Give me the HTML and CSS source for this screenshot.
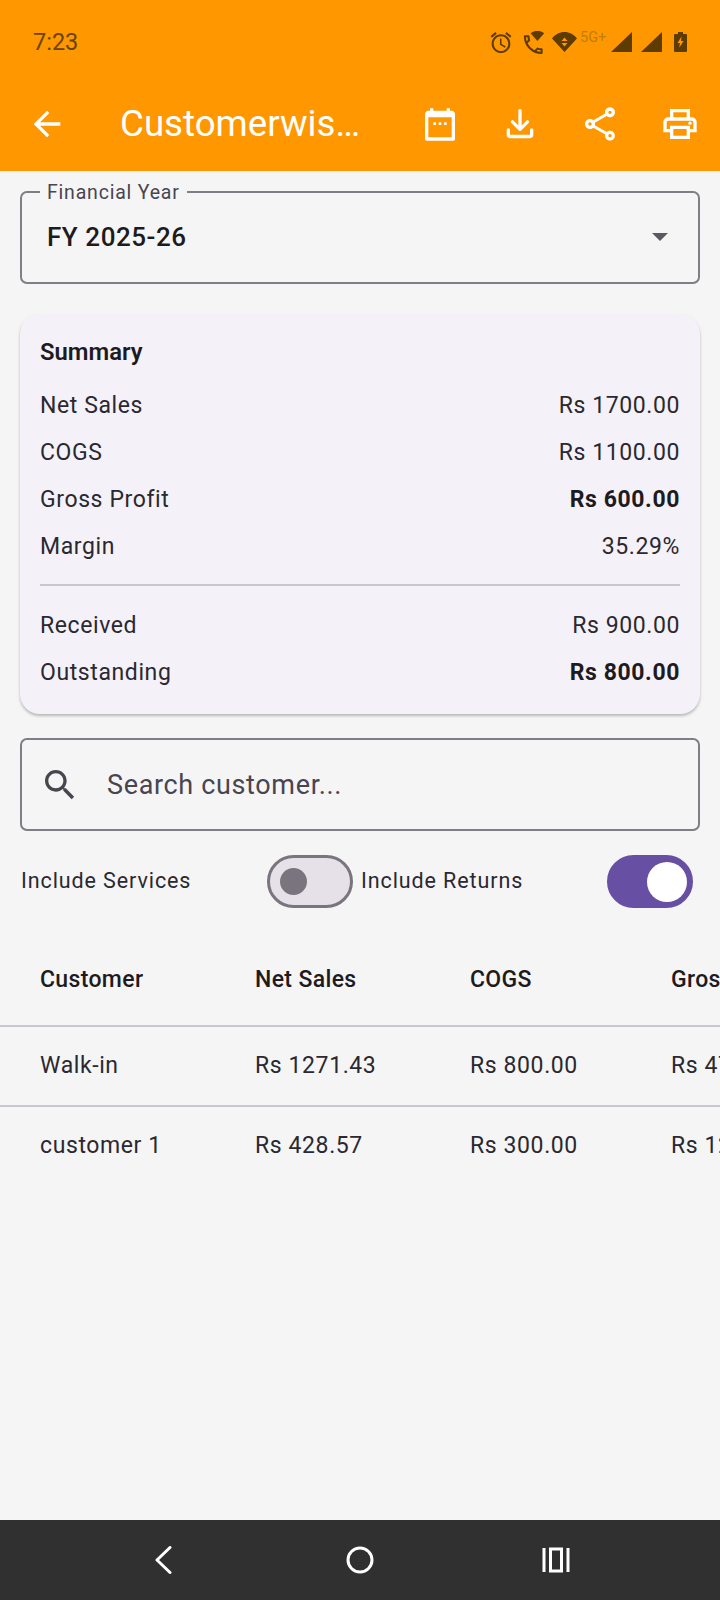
FILE: index.html

```html
<!DOCTYPE html>
<html lang="en">
<head>
  <meta charset="UTF-8" />
  <meta name="viewport" content="width=device-width, initial-scale=1.0"/>
  <title>Customerwise Report</title>
  <link rel="stylesheet" href="styles.css">
</head>
<body>
  <header class="top">
    <div class="status">
      <span class="time">7:23</span>
      <div class="status-icons">
        <svg class="st-alarm" viewBox="2 1.800 20 20.200"><path d="M22 5.720l-4.600-3.860-1.290 1.530 4.600 3.860L22 5.720zM7.880 3.390L6.600 1.860 2 5.710l1.290 1.530 4.590-3.850zM12.500 8H11v6l4.750 2.850.75-1.230-4-2.370V8zM12 4c-4.970 0-9 4.030-9 9s4.020 9 9 9c4.970 0 9-4.030 9-9s-4.030-9-9-9zm0 16c-3.870 0-7-3.130-7-7s3.130-7 7-7 7 3.130 7 7-3.130 7-7 7z"/></svg>
        <svg class="st-call" viewBox="3 1 19.500 22"><path d="M6.540 7c.06.89.21 1.760.45 2.590l-1.200 1.200c-.41-1.200-.67-2.470-.76-3.790h1.510m9.860 12.020c.85.24 1.720.39 2.600.45v1.490c-1.320-.09-2.590-.35-3.800-.75l1.200-1.190M7.500 5H4c-.55 0-1 .45-1 1 0 9.390 7.610 17 17 17 .55 0 1-.45 1-1v-3.490c0-.55-.45-1-1-1-1.240 0-2.450-.2-3.570-.57-.1-.04-.21-.05-.31-.05-.26 0-.51.1-.71.29l-2.200 2.200c-2.830-1.450-5.150-3.760-6.590-6.590l2.200-2.200c.28-.28.36-.67.25-1.020C8.700 8.450 8.500 7.250 8.500 6c0-.55-.45-1-1-1z"/><path d="M9.500 3.200C11.400 1.600 13.600 1 16 1s4.600.6 6.500 2.200L16 10.500z"/></svg>
        <svg class="st-wifi" viewBox="0 0 25 20"><path fill-rule="evenodd" d="M0 6.500C3 2.500 7.500 0 12.500 0S22 2.500 25 6.500L12.500 20zM12.500 5.500l-3 3.500h6zM9.500 11l3 3.500 3-3.500z"/></svg>
        <span class="st-5g">5G+</span>
        <svg class="st-signal" viewBox="0 0 21 20"><path d="M21 0v20H0z"/></svg>
        <svg class="st-signal st-signal-last" viewBox="0 0 21 20"><path d="M21 0v20H0z"/></svg>
        <svg class="st-battery" viewBox="0 0 13 20"><path fill-rule="evenodd" d="M4 0h5v2h3a1 1 0 0 1 1 1v16a1 1 0 0 1-1 1H1a1 1 0 0 1-1-1V3a1 1 0 0 1 1-1h3zM7.500 4.500L3.500 11h2.500l-.8 4.800L9.500 9H7z"/></svg>
      </div>
    </div>
    <div class="appbar">
      <button class="icon-btn back">
        <svg viewBox="0 0 24 24"><path d="M20 11H7.830l5.590-5.590L12 4l-8 8 8 8 1.410-1.410L7.830 13H20v-2z"/></svg>
      </button>
      <h1 class="title">Customerwis…</h1>
      <button class="icon-btn">
        <svg viewBox="0 0 24 24"><path d="M19 4h-1V2.500h-2V4H8V2.500H6V4H5C3.900 4 3 4.900 3 6v15c0 .6.400 1 1 1h16c.6 0 1-.4 1-1V6c0-1.100-.9-2-2-2zm0 16H5V8h14v12z"/><rect x="8" y="11" width="1.600" height="1.600"/><rect x="11.200" y="11" width="1.600" height="1.600"/><rect x="14.400" y="11" width="1.600" height="1.600"/></svg>
      </button>
      <button class="icon-btn">
        <svg viewBox="0 0 24 24"><path class="line" d="M12 4v11M7.500 10.700l4.500 4.500 4.500-4.500M5 15.500v3a1 1 0 0 0 1 1h12a1 1 0 0 0 1-1v-3"/></svg>
      </button>
      <button class="icon-btn">
        <svg viewBox="0 0 24 24"><path d="M18 16.080c-.76 0-1.440.3-1.960.77L8.910 12.700c.05-.23.09-.46.09-.7s-.04-.47-.09-.7l7.050-4.110c.54.5 1.250.81 2.040.81 1.660 0 3-1.340 3-3s-1.340-3-3-3-3 1.340-3 3c0 .24.04.47.09.7L8.040 9.810C7.500 9.310 6.790 9 6 9c-1.660 0-3 1.340-3 3s1.340 3 3 3c.79 0 1.500-.31 2.040-.81l7.120 4.160c-.05.21-.08.43-.08.65 0 1.610 1.310 2.920 2.920 2.920s2.920-1.310 2.920-2.920-1.310-2.920-2.920-2.920zM18 4c.55 0 1 .45 1 1s-.45 1-1 1-1-.45-1-1 .45-1 1-1zM6 13c-.55 0-1-.45-1-1s.45-1 1-1 1 .45 1 1-.45 1-1 1zm12 7.020c-.55 0-1-.45-1-1s.45-1 1-1 1 .45 1 1-.45 1-1 1z"/></svg>
      </button>
      <button class="icon-btn">
        <svg viewBox="0 0 24 24"><path d="M19 8h-1V3H6v5H5c-1.660 0-3 1.340-3 3v6h4v4h12v-4h4v-6c0-1.660-1.340-3-3-3zM8 5h8v3H8V5zm8 12v2H8v-4h8v2zm2-2v-2H6v2H4v-4c0-.55.45-1 1-1h14c.55 0 1 .45 1 1v4h-2z"/><circle cx="18" cy="11.500" r="1"/></svg>
      </button>
    </div>
  </header>

  <main class="content">
    <div class="field select-field">
      <span class="field-label">Financial Year</span>
      <span class="select-value">FY 2025-26</span>
      <span class="caret"></span>
    </div>

    <section class="summary">
      <h2 class="summary-title">Summary</h2>
      <div class="row"><span>Net Sales</span><span>Rs 1700.00</span></div>
      <div class="row"><span>COGS</span><span>Rs 1100.00</span></div>
      <div class="row"><span>Gross Profit</span><strong>Rs 600.00</strong></div>
      <div class="row"><span>Margin</span><span>35.29%</span></div>
      <hr class="divider">
      <div class="row"><span>Received</span><span>Rs 900.00</span></div>
      <div class="row"><span>Outstanding</span><strong>Rs 800.00</strong></div>
    </section>

    <div class="field search-field">
      <svg class="search-icon" viewBox="0 0 24 24"><path d="M15.500 14h-.79l-.28-.27C15.410 12.590 16 11.110 16 9.500 16 5.910 13.090 3 9.500 3S3 5.910 3 9.500 5.910 16 9.500 16c1.610 0 3.090-.59 4.230-1.570l.27.28v.79l5 4.990L20.490 19l-4.990-5zm-6 0C7.010 14 5 11.990 5 9.500S7.010 5 9.500 5 14 7.010 14 9.500 11.990 14 9.500 14z"/></svg>
      <span class="placeholder">Search customer...</span>
    </div>

    <div class="toggles">
      <div class="toggle-item toggle-services">
        <span class="toggle-label">Include Services</span>
        <span class="switch"><span class="knob"></span></span>
      </div>
      <div class="toggle-item toggle-returns">
        <span class="toggle-label">Include Returns</span>
        <span class="switch on"><span class="knob"></span></span>
      </div>
    </div>

    <div class="table-wrap">
      <table class="report">
        <thead>
          <tr><th>Customer</th><th>Net Sales</th><th>COGS</th><th>Gross Profit</th></tr>
        </thead>
        <tbody>
          <tr><td>Walk-in</td><td>Rs 1271.43</td><td>Rs 800.00</td><td>Rs 471.43</td></tr>
          <tr><td>customer 1</td><td>Rs 428.57</td><td>Rs 300.00</td><td>Rs 128.57</td></tr>
        </tbody>
      </table>
    </div>
  </main>

  <nav class="navbar">
    <svg viewBox="0 0 28 28"><path class="nav-line" d="M21 1.500L8 14l13 12.500"/></svg>
    <svg viewBox="0 0 28 28"><circle class="nav-line" cx="14" cy="14" r="12"/></svg>
    <svg viewBox="0 0 28 28"><path class="nav-line nav-square" d="M2 2v24M26 2v24M8.500 3h11v22h-11z"/></svg>
  </nav>
</body>
</html>
```

FILE: styles.css

```css
* {
  box-sizing: border-box;
}

html, body {
  margin: 0;
  padding: 0;
  height: 100%;
}

body {
  width: 720px;
  height: 1600px;
  display: flex;
  flex-direction: column;
  overflow: hidden;
  background-color: #f5f5f6;
  font-family: Roboto, "Liberation Sans", sans-serif;
  color: #1d1b20;
}

.top {
  height: 171px;
  flex: none;
  background-color: #ff9800;
}

.status {
  height: 84px;
  padding: 0 33px 0 33px;
  display: flex;
  justify-content: space-between;
  align-items: center;
}

.time {
  font-size: 23.500px;
  color: #6b4300;
}

.status-icons {
  display: flex;
  align-items: center;
  fill: #5e3c00;
}

.status-icons svg {
  display: block;
  height: 20px;
}

.st-alarm {
  width: 22px;
  height: 21px !important;
}

.st-call {
  width: 22px;
  height: 23px !important;
  margin-left: 11px;
}

.st-wifi {
  width: 25px;
  margin-left: 7px;
}

.st-5g {
  width: 29px;
  margin: 0 2px 0 3px;
  font-size: 14.500px;
  line-height: 13px;
  color: #c17d0a;
  align-self: flex-start;
}

.st-signal {
  width: 21px;
  margin-right: 9px;
}

.st-signal-last {
  margin-right: 12px;
}

.st-battery {
  width: 13px;
}

.appbar {
  height: 87px;
  display: flex;
  align-items: center;
  padding-bottom: 8px;
}

.icon-btn {
  width: 80px;
  height: 60px;
  flex: none;
  padding: 0;
  border: 0;
  background: none;
  display: flex;
  align-items: center;
  justify-content: center;
  fill: #fff;
}

.icon-btn svg {
  width: 40px;
  height: 40px;
}

.line {
  fill: none;
  stroke: #fff;
  stroke-width: 2;
  stroke-linecap: round;
  stroke-linejoin: round;
}

.back {
  margin-left: 7px;
}

.title {
  flex: 1;
  margin: 0 0 0 33px;
  font-size: 36.700px;
  font-weight: 400;
  color: #fff;
  white-space: nowrap;
}

.content {
  flex: 1;
  padding-top: 20px;
  min-height: 0;
}

.field {
  position: relative;
  margin: 0 20px;
  width: 680px;
  border: 2px solid #7f7d85;
  border-radius: 7px;
  display: flex;
  align-items: center;
}

.select-field {
  height: 93px;
  padding: 0 30px 1px 25px;
  justify-content: space-between;
}

.field-label {
  position: absolute;
  top: -11px;
  left: 18px;
  padding: 0 7px;
  background-color: #f5f5f6;
  font-size: 19.500px;
  line-height: 21px;
  letter-spacing: 0.800px;
  color: #49454f;
}

.select-value {
  font-size: 26px;
  font-weight: 500;
  letter-spacing: 0.550px;
}

.caret {
  width: 0;
  height: 0;
  border-left: 8px solid transparent;
  border-right: 8px solid transparent;
  border-top: 8px solid #5c5a60;
}

.summary {
  margin: 30px 20px 0;
  width: 680px;
  height: 400px;
  padding: 24px 20px 0;
  border-radius: 20px;
  background-color: #f5f1f8;
  box-shadow: 0 2px 3px rgba(0, 0, 0, 0.25);
}

.summary-title {
  margin: 0 0 16px;
  font-size: 23.800px;
  line-height: 28px;
  font-weight: 600;
}

.row {
  height: 47px;
  display: flex;
  justify-content: space-between;
  align-items: center;
  font-size: 23px;
  letter-spacing: 0.600px;
  color: #2a2830;
}

.row strong {
  font-weight: 700;
  color: #1d1b20;
}

.divider {
  height: 2px;
  margin: 14px 0 16px;
  border: 0;
  background-color: #cac6d0;
}

.search-field {
  margin-top: 24px;
  height: 93px;
  padding-left: 18px;
}

.search-icon {
  width: 40px;
  height: 40px;
  fill: #49454f;
}

.placeholder {
  margin-left: 27px;
  font-size: 27px;
  letter-spacing: 0.650px;
  color: #49454f;
}

.toggles {
  margin-top: 24px;
  padding-left: 21px;
  display: flex;
}

.toggle-item {
  display: flex;
  justify-content: space-between;
  align-items: center;
  font-size: 21.500px;
  letter-spacing: 0.900px;
  color: #2a2830;
}

.toggle-label {
  padding-bottom: 2px;
}

.toggle-services {
  width: 332px;
}

.toggle-returns {
  width: 332px;
  margin-left: 8px;
}

.switch {
  width: 86px;
  height: 53px;
  padding-left: 10px;
  border: 3px solid #79747e;
  border-radius: 27px;
  background-color: #e6e0e9;
  display: flex;
  align-items: center;
}

.knob {
  width: 27px;
  height: 27px;
  border-radius: 50%;
  background-color: #79747e;
}

.switch.on {
  padding-left: 37px;
  border-color: #6750a4;
  background-color: #6750a4;
}

.switch.on .knob {
  width: 40px;
  height: 40px;
  background-color: #fff;
}

.table-wrap {
  margin-top: 26px;
  overflow: hidden;
}

.report {
  width: 900px;
  table-layout: fixed;
  border-collapse: collapse;
  font-size: 23px;
  letter-spacing: 0.600px;
}

.report th, .report td {
  padding: 0 0 0 40px;
  text-align: left;
  white-space: nowrap;
}

.report th:nth-child(1), .report td:nth-child(1) {
  width: 215px;
}

.report th:nth-child(2), .report td:nth-child(2) {
  width: 215px;
}

.report th:nth-child(3), .report td:nth-child(3) {
  width: 201px;
}

.report th {
  height: 92px;
  font-weight: 500;
  letter-spacing: 0.350px;
}

.report td {
  height: 80px;
  padding-bottom: 2px;
  color: #2a2830;
}

.report tr {
  border-bottom: 2px solid #cac6d6;
}

.report tbody tr:last-child {
  border-bottom: 0;
}

.navbar {
  height: 80px;
  flex: none;
  padding: 0 150px 0 149px;
  display: flex;
  justify-content: space-between;
  align-items: center;
  background-color: #303030;
}

.navbar svg {
  width: 28px;
  height: 28px;
}

.nav-line {
  fill: none;
  stroke: #fff;
  stroke-width: 3;
  stroke-linecap: round;
  stroke-linejoin: round;
}

.nav-square {
  stroke-linecap: butt;
  stroke-linejoin: miter;
}
```
